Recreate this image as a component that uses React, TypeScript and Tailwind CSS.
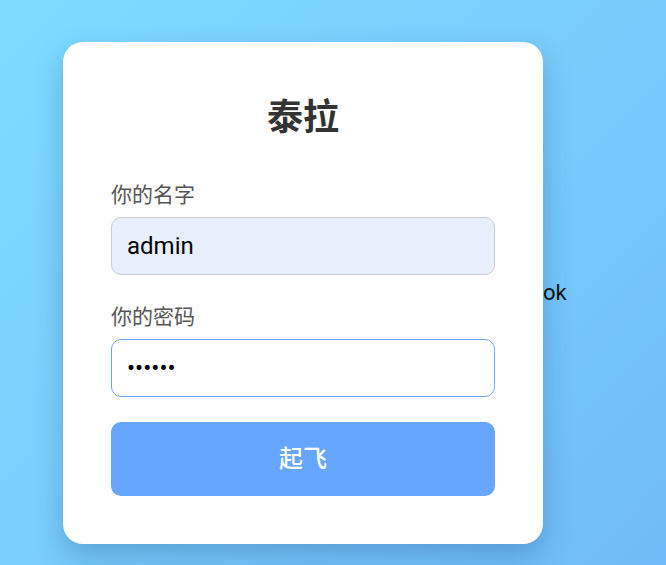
import React from "react";

export default function App() {
  const font = { fontFamily: 'Roboto, "Noto Sans CJK SC", sans-serif' };
  return (
    <div
      className="w-full h-[565px] bg-[linear-gradient(135deg,#7fdbff_0%,#79cffd_45%,#6fbbf9_100%)] flex items-start pt-[42px] pl-[63px] overflow-hidden"
      style={font}
    >
      <div className="w-[480px] h-[502px] bg-white rounded-[20px] shadow-[0_12px_28px_rgba(20,60,120,0.28)] p-[48px] flex flex-col shrink-0">
        <h2 className="h-[56px] flex items-center justify-center text-[36px] font-bold text-[#333333]">
          泰拉
        </h2>
        <label className="mt-[34px] h-[30px] leading-[30px] text-[21px] text-[#555555]">
          你的名字
        </label>
        <input
          className="mt-[7px] h-[58px] w-full rounded-[10px] border border-[#c9ccd4] bg-[#e8f0fe] px-[15px] text-[24px] text-black outline-none"
          defaultValue="admin"
          style={font}
        />
        <label className="mt-[27px] h-[30px] leading-[30px] text-[21px] text-[#555555]">
          你的密码
        </label>
        <input
          type="password"
          className="mt-[7px] h-[58px] w-full rounded-[10px] border border-[#66a6ff] bg-white px-[15px] text-[24px] text-black outline-none"
          defaultValue="123456"
          style={font}
        />
        <button
          className="mt-[25px] h-[74px] w-full rounded-[10px] bg-[#66a6ff] text-white text-[24px] font-medium"
          style={font}
        >
          起飞
        </button>
      </div>
      <div className="mt-[240px] text-[22px] text-[#111] leading-none">
        ok
      </div>
    </div>
  );
}
